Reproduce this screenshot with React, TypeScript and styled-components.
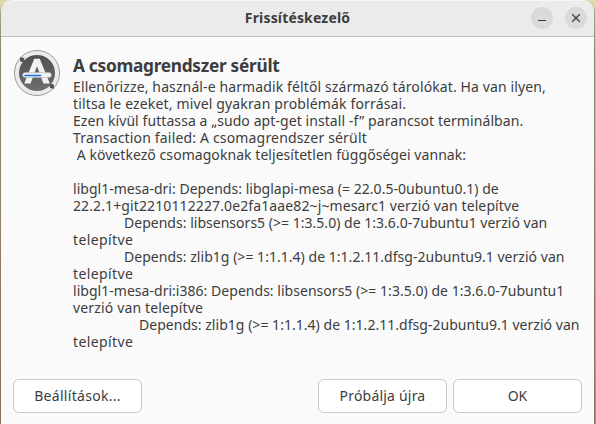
import React from "react";
import styled, { createGlobalStyle } from "styled-components";

const GlobalStyle = createGlobalStyle`
  html, body { margin: 0; padding: 0; overflow: hidden; }
  *, *::before, *::after { box-sizing: border-box; }
  body, button { font-family: "Noto Sans", "Open Sans", sans-serif; color: #3d3d3d; }
`;

const Desktop = styled.div`
  width: 596px;
  height: 424px;
  padding: 0 1px 0 0;
  background: linear-gradient(to bottom, #e0d9ae 0%, #c9bf97 20%, #c4ad8f 60%, #c08a74 100%);
`;

const Window = styled.main`
  display: flex;
  flex-direction: column;
  height: 424px;
  padding: 0 1px;
  border-radius: 12px 12px 0 0;
  background: linear-gradient(to bottom, #b4af92 0%, #8d8466 12%, #8f8168 50%, #8f6b5c 100%);
`;

const TitleBar = styled.header`
  display: grid;
  grid-template-columns: 1fr auto 1fr;
  align-items: center;
  height: 37px;
  padding: 0 7px 1px;
  border-top: 1px solid #f7f7f7;
  border-bottom: 1px solid #bdbdbd;
  border-radius: 11px 11px 0 0;
  background: #ebebeb;
`;

const Title = styled.h1`
  grid-column: 2;
  margin: 0;
  font-size: 14px;
  line-height: 20px;
  font-weight: 700;
  letter-spacing: 0.16px;
`;

const WindowControls = styled.div`
  display: flex;
  justify-content: flex-end;
  gap: 12px;
`;

const ControlButton = styled.button`
  display: grid;
  place-items: center;
  width: 22px;
  height: 22px;
  padding: 0;
  border: 0;
  border-radius: 50%;
  background: #dadada;
`;

const Content = styled.section`
  flex: 1;
  display: flex;
  flex-direction: column;
  justify-content: space-between;
  padding: 12px 12px 11px 12px;
  background: #fafafa;
`;

const Message = styled.div`
  display: flex;
  gap: 12px;
`;

const MessageText = styled.div`
  padding-top: 5px;
`;

const Heading = styled.h2`
  margin: 0;
  font-size: 17.3px;
  line-height: 24px;
  font-weight: 700;
  letter-spacing: -0.29px;
`;

const Line = styled.div<{ $indent?: number; $tracking?: number }>`
  height: 17px;
  padding-left: ${(p) => p.$indent ?? 0}px;
  font-size: 14px;
  line-height: 17px;
  white-space: pre;
  letter-spacing: ${(p) => p.$tracking ?? 0}px;
`;

const Actions = styled.footer`
  display: flex;
  gap: 6px;
`;

const ActionButton = styled.button<{ $pushLeft?: boolean; $tracking?: number }>`
  width: 129px;
  height: 34px;
  padding: 0 0 1px;
  margin-right: ${(p) => (p.$pushLeft ? "auto" : "0")};
  border: 1px solid #c9c9c9;
  border-radius: 6px;
  background: #fff;
  font-size: 14px;
  line-height: 20px;
  letter-spacing: ${(p) => p.$tracking ?? 0}px;
`;

const UpdaterIcon = () => (
  <svg width="48" height="48" viewBox="0 0 48 48" aria-hidden="true">
    <defs>
      <linearGradient id="disc" x1="0" y1="0" x2="0" y2="1">
        <stop offset="0" stopColor="#505050" />
        <stop offset="1" stopColor="#6e6e6e" />
      </linearGradient>
    </defs>
    <circle cx="24" cy="24" r="22.5" fill="#ececec" stroke="#999" strokeWidth="1" />
    <circle cx="24" cy="24" r="18" fill="url(#disc)" />
    <path d="M7.2 7.4v5.4h5l-1.8-1.8 1.2-1.1-1.8-1.7-1 1z" fill="#484848" />
    <path d="M40.8 40.6v-5.4h-5l1.8 1.8-1.2 1.1 1.8 1.7 1-1z" fill="#484848" />
    <path d="M21.2 9.8h5.6L36.8 34.4h-6.4L24 17.2l-6.4 17.2h-6.4z" fill="#f1f1f1" />
    <rect x="9.6" y="23.6" width="28.8" height="5" rx="2.5" fill="#f1f1f1" stroke="#a8a8a8" strokeWidth=".5" />
    <path d="M12 26.4h15.6" stroke="#1470e0" strokeWidth="1.5" strokeLinecap="round" />
  </svg>
);

const lines: { text: string; indent?: number; tracking?: number }[] = [
  { text: "Ellenőrizze, használ-e harmadik féltől származó tárolókat. Ha van ilyen,", tracking: 0.115 },
  { text: "tiltsa le ezeket, mivel gyakran problémák forrásai.", tracking: 0.15 },
  { text: "Ezen kívül futtassa a „sudo apt-get install -f” parancsot terminálban.", tracking: 0.08 },
  { text: "Transaction failed: A csomagrendszer sérült", tracking: 0.17 },
  { text: " A következő csomagoknak teljesítetlen függőségei vannak:", tracking: 0.055 },
  { text: "" },
  { text: "libgl1-mesa-dri: Depends: libglapi-mesa (= 22.0.5-0ubuntu0.1) de", tracking: 0.025 },
  { text: "22.2.1+git2210112227.0e2fa1aae82~j~mesarc1 verzió van telepítve", tracking: 0.115 },
  { text: "Depends: libsensors5 (>= 1:3.5.0) de 1:3.6.0-7ubuntu1 verzió van", indent: 51, tracking: 0.02 },
  { text: "telepítve", tracking: 0.38 },
  { text: "Depends: zlib1g (>= 1:1.1.4) de 1:1.2.11.dfsg-2ubuntu9.1 verzió van", indent: 51, tracking: 0.03 },
  { text: "telepítve", tracking: 0.38 },
  { text: "libgl1-mesa-dri:i386: Depends: libsensors5 (>= 1:3.5.0) de 1:3.6.0-7ubuntu1", tracking: 0.03 },
  { text: "verzió van telepítve", tracking: 0.15 },
  { text: "Depends: zlib1g (>= 1:1.1.4) de 1:1.2.11.dfsg-2ubuntu9.1 verzió van", indent: 66, tracking: 0.03 },
  { text: "telepítve", tracking: 0.38 },
];

export default function App() {
  return (
    <>
      <GlobalStyle />
      <Desktop>
        <Window>
          <TitleBar>
            <Title>Frissítéskezelő</Title>
            <WindowControls>
              <ControlButton aria-label="Kis méret">
                <svg width="16" height="16" viewBox="0 0 16 16">
                  <path d="M4 10.5h8" stroke="#3d3d3d" strokeWidth="1" />
                </svg>
              </ControlButton>
              <ControlButton aria-label="Bezárás">
                <svg width="16" height="16" viewBox="0 0 16 16">
                  <path d="M4.2 4.2l7.6 7.6M11.8 4.2l-7.6 7.6" stroke="#3d3d3d" strokeWidth="1.3" />
                </svg>
              </ControlButton>
            </WindowControls>
          </TitleBar>
          <Content>
            <Message>
              <UpdaterIcon />
              <MessageText>
                <Heading>A csomagrendszer sérült</Heading>
                {lines.map((line, i) => (
                  <Line key={i} $indent={line.indent} $tracking={line.tracking}>
                    {line.text}
                  </Line>
                ))}
              </MessageText>
            </Message>
            <Actions>
              <ActionButton $pushLeft $tracking={0.3}>Beállítások...</ActionButton>
              <ActionButton $tracking={0.2}>Próbálja újra</ActionButton>
              <ActionButton>OK</ActionButton>
            </Actions>
          </Content>
        </Window>
      </Desktop>
    </>
  );
}
